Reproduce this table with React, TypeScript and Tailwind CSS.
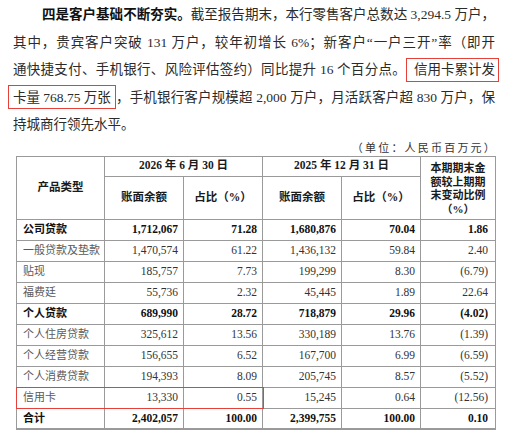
const serif = "font-['Liberation_Serif','Noto_Sans_CJK_SC',serif]";

type Row = {
  name: string;
  a: string;
  b: string;
  c: string;
  d: string;
  e: string;
  bold?: boolean;
  mark?: boolean;
};

const rows: Row[] = [
  { name: '公司贷款', a: '1,712,067', b: '71.28', c: '1,680,876', d: '70.04', e: '1.86', bold: true },
  { name: '一般贷款及垫款', a: '1,470,574', b: '61.22', c: '1,436,132', d: '59.84', e: '2.40' },
  { name: '贴现', a: '185,757', b: '7.73', c: '199,299', d: '8.30', e: '(6.79)' },
  { name: '福费廷', a: '55,736', b: '2.32', c: '45,445', d: '1.89', e: '22.64' },
  { name: '个人贷款', a: '689,990', b: '28.72', c: '718,879', d: '29.96', e: '(4.02)', bold: true },
  { name: '个人住房贷款', a: '325,612', b: '13.56', c: '330,189', d: '13.76', e: '(1.39)' },
  { name: '个人经营贷款', a: '156,655', b: '6.52', c: '167,700', d: '6.99', e: '(6.59)' },
  { name: '个人消费贷款', a: '194,393', b: '8.09', c: '205,745', d: '8.57', e: '(5.52)' },
  { name: '信用卡', a: '13,330', b: '0.55', c: '15,245', d: '0.64', e: '(12.56)', mark: true },
  { name: '合计', a: '2,402,057', b: '100.00', c: '2,399,755', d: '100.00', e: '0.10', bold: true },
];

const line = 'h-[27.5px] leading-[27.5px] text-justify [text-align-last:justify] whitespace-nowrap';
const redBox = 'inline-block border-[1.5px] border-[#e5403a] leading-[19px] py-[1.5px]';

export default function App() {
  return (
    <div className={`w-[511px] h-[438px] bg-white overflow-hidden ${serif}`}>
      {/* paragraph */}
      <div className="pl-[13px] pr-[16px] pt-[1px] text-[13.5px] text-[#2b2b2b]">
        <div className={`${line} indent-[29px]`}>
          <span className="font-bold text-[#111]">四是客户基础不断夯实。</span>截至报告期末，本行零售客户总数达 3,294.5 万户，
        </div>
        <div className={line}>其中，贵宾客户突破 131 万户，较年初增长 6%；新客户“一户三开”率（即开</div>
        <div className={line}>
          通快捷支付、手机银行、风险评估签约）同比提升 16 个百分点。
          <span className={`${redBox} pl-[7px] pr-[3px] mr-[-4px]`}>信用卡累计发</span>
        </div>
        <div className={line}>
          <span className={`${redBox} pl-[4px] pr-[4px] ml-[-5px]`}>卡量 768.75 万张</span>，手机银行客户规模超 2,000 万户，月活跃客户超 830 万户，保
        </div>
        <div className="h-[27.5px] leading-[27.5px]">持城商行领先水平。</div>
      </div>

      {/* unit */}
      <div className="mt-[2px] h-[14px] leading-[14px] pr-[14px] text-right whitespace-nowrap text-[11px] tracking-[2.2px] text-[#333]">
        （单位：人民币百万元）
      </div>

      {/* table */}
      <table className="mt-[1px] ml-[16px] w-[479px] table-fixed border-collapse border-b-2 border-[#9a9a9a] text-[11.5px] text-[#333]">
        <colgroup>
          <col className="w-[88px]" />
          <col className="w-[79px]" />
          <col className="w-[79px]" />
          <col className="w-[79px]" />
          <col className="w-[79px]" />
          <col className="w-[75px]" />
        </colgroup>
        <thead className="font-bold text-[#1a1a1a]">
          <tr className="h-[20px]">
            <th rowSpan={2} className="border border-[#9a9a9a] font-bold">产品类型</th>
            <th colSpan={2} className="border border-[#9a9a9a] font-bold">2026 年 6 月 30 日</th>
            <th colSpan={2} className="border border-[#9a9a9a] font-bold">2025 年 12 月 31 日</th>
            <th rowSpan={2} className="border border-[#9a9a9a] font-bold text-[11px] leading-[13.5px] pt-[3px]">
              本期期末金<br />额较上期期<br />末变动比例<br />（%）
            </th>
          </tr>
          <tr className="h-[43px]">
            <th className="border border-[#9a9a9a] font-bold">账面余额</th>
            <th className="border border-[#9a9a9a] font-bold">占比（%）</th>
            <th className="border border-[#9a9a9a] font-bold">账面余额</th>
            <th className="border border-[#9a9a9a] font-bold">占比（%）</th>
          </tr>
        </thead>
        <tbody>
          {rows.map((r) => (
            <tr key={r.name} className={`h-[21px] ${r.bold ? 'font-bold text-[#111]' : ''}`}>
              <td className={`relative border border-[#9a9a9a] pl-[6px] text-[11px] ${r.bold ? '' : 'text-[#5a5a5a]'}`}>
                {r.name}
                {r.mark && (
                  <div className="absolute left-[-1px] top-[-1px] w-[248px] h-[calc(100%+2px)] border-[1.5px] border-[#e5403a]" />
                )}
              </td>
              <td className="border border-[#9a9a9a] text-right pr-[5px]">{r.a}</td>
              <td className="border border-[#9a9a9a] text-right pr-[5px]">{r.b}</td>
              <td className="border border-[#9a9a9a] text-right pr-[5px]">{r.c}</td>
              <td className="border border-[#9a9a9a] text-right pr-[5px]">{r.d}</td>
              <td className="border border-[#9a9a9a] text-right pr-[7px]">{r.e}</td>
            </tr>
          ))}
        </tbody>
      </table>
    </div>
  );
}
